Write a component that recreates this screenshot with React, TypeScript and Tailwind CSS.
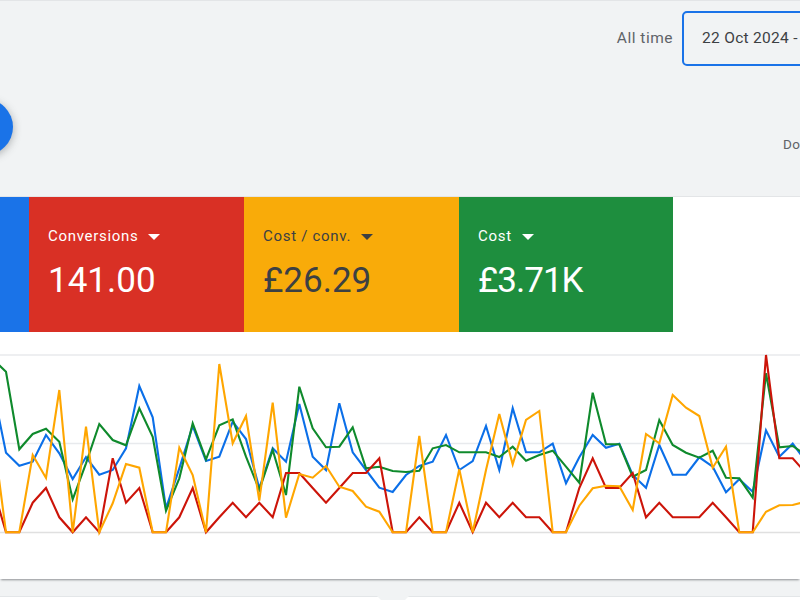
const STEP = 40 / 3;

// y values read off the chart, one per day, in 3x-zoom units above y=340
const blue = [142, 338, 377, 365, 285, 340, 417, 351, 404, 390, 325, 138, 232, 505, 385, 258, 363, 350, 245, 297, 445, 325, 365, 192, 350, 390, 190, 337, 390, 443, 456, 405, 378, 365, 285, 390, 363, 258, 390, 205, 337, 337, 311, 430, 352, 285, 323, 311, 405, 443, 315, 404, 404, 352, 380, 457, 418, 455, 271, 350, 311, 365];
const green = [57, 95, 328, 282, 266, 305, 478, 370, 252, 300, 316, 205, 290, 512, 415, 250, 358, 256, 238, 350, 450, 330, 465, 140, 265, 322, 320, 262, 385, 380, 393, 396, 392, 325, 315, 337, 337, 337, 351, 320, 362, 345, 332, 380, 428, 158, 313, 313, 410, 390, 240, 315, 338, 353, 332, 413, 415, 473, 100, 322, 318, 345];
const red = [440, 577, 577, 488, 444, 532, 577, 532, 577, 355, 488, 444, 577, 577, 532, 444, 577, 532, 488, 532, 488, 532, 399, 399, 444, 488, 444, 399, 399, 355, 577, 577, 532, 577, 577, 488, 577, 488, 532, 488, 532, 532, 577, 577, 444, 355, 444, 444, 399, 532, 488, 532, 532, 532, 488, 532, 577, 577, 45, 355, 355, 400];
const orange = [273, 577, 577, 345, 414, 150, 577, 260, 577, 490, 372, 383, 577, 577, 323, 405, 577, 72, 310, 228, 482, 188, 533, 402, 413, 378, 440, 453, 500, 515, 577, 577, 288, 577, 577, 388, 577, 390, 222, 373, 240, 213, 577, 577, 497, 445, 437, 439, 510, 282, 310, 165, 203, 228, 383, 320, 577, 577, 515, 496, 495, 485];

const series = [
  { color: "#0b6fe8", values: blue },
  { color: "#0f8a2c", values: green },
  { color: "#cc1409", values: red },
  { color: "#ffa600", values: orange },
];

// the chart svg starts at page y=340
const toPoints = (values: number[]) =>
  values.map((v, i) => `${(6 + STEP * (i - 1)).toFixed(1)},${(v / 3).toFixed(1)}`).join(" ");

function Caret({ className }: { className: string }) {
  return (
    <svg width="12" height="6" viewBox="0 0 12 6" className={className}>
      <path d="M0 0h12L6 6z" fill="currentColor" />
    </svg>
  );
}

function Scorecard({ label, value, className, valueClass = "" }: { label: string; value: string; className: string; valueClass?: string }) {
  return (
    <div className={`h-full flex flex-col pl-[19px] pt-[29px] ${className}`}>
      <div className="flex items-center gap-[10px] text-[15px] leading-5 tracking-[0.7px]">
        <span>{label}</span>
        <Caret className="mt-[1px]" />
      </div>
      <div className={`mt-[13px] text-[35px] leading-[44px] font-normal ${valueClass}`}>{value}</div>
    </div>
  );
}

export default function App() {
  return (
    <div
      className="w-[800px] h-[600px] overflow-hidden flex flex-col bg-[#f1f3f4]"
      style={{ fontFamily: "Roboto, 'Liberation Sans', sans-serif" }}
    >
      {/* Toolbar */}
      <div className="h-[196px] shrink-0 border-t border-[#e3e5e7] flex flex-col">
        <div className="flex items-center justify-end pt-[10px]">
          <span className="text-[15.5px] tracking-[0.5px] text-[#5f6368] mr-[9px]">All time</span>
          <div className="w-[140px] -mr-[22px] h-[55px] flex items-center pl-[18px] border-2 border-[#1a73e8] rounded-[5px] text-[15.5px] tracking-[0.3px] text-[#3c4043] whitespace-nowrap overflow-hidden">
            22 Oct 2024 - 
          </div>
        </div>
        <div className="flex items-start justify-between">
          <div className="w-[56px] h-[56px] -ml-[43px] mt-[33px] rounded-full bg-[#1a73e8] shadow-[0_2px_8px_rgba(60,64,67,0.4)]" />
          <span className="mt-[68px] -mr-[8px] w-[25px] overflow-hidden text-[13.5px] font-normal tracking-[0.4px] text-[#5f6368]">Do</span>
        </div>
      </div>

      {/* Scorecards */}
      <div className="relative z-10 h-[136px] shrink-0 bg-white flex border-t border-[#e3e5e7]">
        <div className="w-[29px] bg-[#1a73e8]" />
        <Scorecard label="Conversions" value="141.00" className="w-[215px] bg-[#d93025] text-white" />
        <Scorecard label="Cost / conv." value="£26.29" className="w-[215px] bg-[#f9ab09] text-[#3c4043]" />
        <Scorecard label="Cost" value="£3.71K" valueClass="tracking-[-1px]" className="w-[214px] bg-[#1e8e3e] text-white" />
      </div>

      {/* Chart */}
      <div className="h-[247px] shrink-0 bg-white shadow-[0_2px_2px_-1px_rgba(60,64,67,0.55)] pt-[8px]">
        <svg width="800" height="239" viewBox="0 0 800 239">
          <line x1="0" x2="800" y1="15" y2="15" stroke="#e8eaed" strokeWidth="1.5" />
          <line x1="0" x2="800" y1="103.5" y2="103.5" stroke="#e8eaed" strokeWidth="1.5" />
          <line x1="0" x2="800" y1="192.5" y2="192.5" stroke="#e0e0e0" strokeWidth="1.5" />
          {series.map((s) => (
            <polyline key={s.color} points={toPoints(s.values)} fill="none" stroke={s.color} strokeWidth="2.1" strokeLinejoin="miter" />
          ))}
        </svg>
      </div>

      {/* Next card peeking in at the bottom, with the notch of its tab */}
      <div className="mt-[17px] h-[10px] shrink-0 bg-white border-t border-[#e3e6e8]">
        <svg width="32" height="4" viewBox="0 0 32 4" className="ml-[377px] -mt-[1px]">
          <path d="M0 0h32l-4 4H4z" fill="#f1f3f4" />
        </svg>
      </div>
    </div>
  );
}
